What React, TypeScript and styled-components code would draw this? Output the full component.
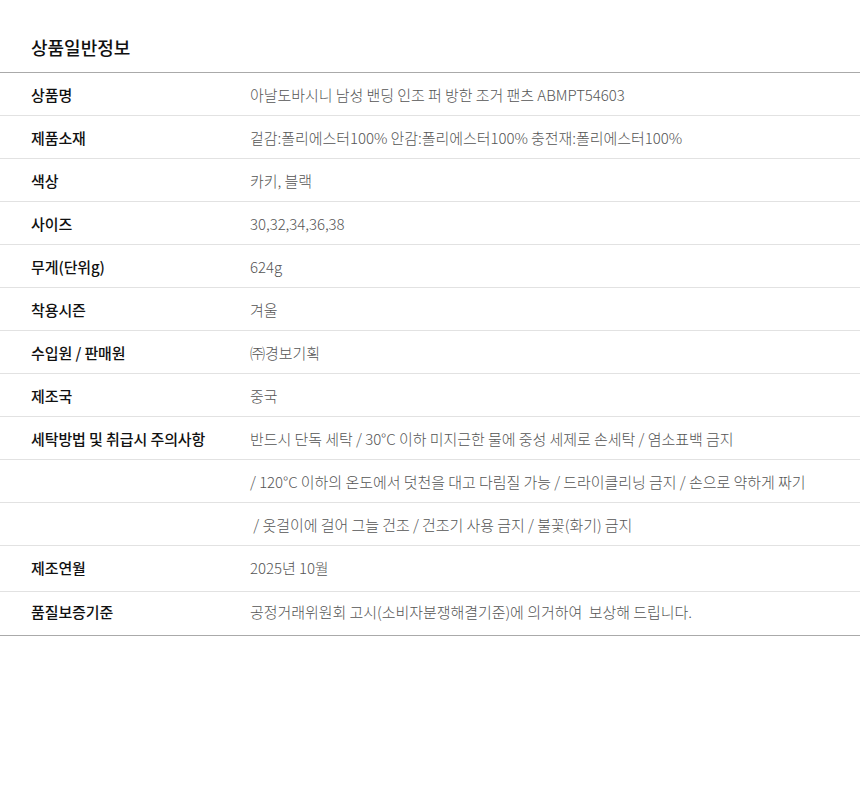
import React from "react";
import styled, { createGlobalStyle } from "styled-components";

const Global = createGlobalStyle`
  html, body { margin: 0; padding: 0; background: #fff; }
  body { font-family: "Noto Sans CJK KR", "Noto Sans", sans-serif; }
`;

const Wrap = styled.section`
  width: 860px;
`;

const Title = styled.h2`
  margin: 0;
  padding: 34px 31px 12px;
  height: 26px;
  line-height: 26px;
  font-size: 18px;
  font-weight: 500;
  color: #111;
  border-bottom: 1px solid #aaa;
`;

const Table = styled.div`
  display: flex;
  flex-direction: column;
  border-bottom: 1px solid #aaa;
`;

const Row = styled.div<{ $h?: number; $pb?: number; $last?: boolean }>`
  display: grid;
  grid-template-columns: 219px 1fr;
  align-items: center;
  box-sizing: border-box;
  height: ${(p) => p.$h ?? 43}px;
  padding: 0 0 ${(p) => p.$pb ?? 0}px 31px;
  border-bottom: ${(p) => (p.$last ? "none" : "1px solid #e2e2e2")};
`;

const Label = styled.div`
  font-size: 15px;
  font-weight: 500;
  color: #111;
  white-space: nowrap;
  letter-spacing: -0.1px;
`;

const Value = styled.div`
  font-size: 15px;
  font-weight: 300;
  color: #555;
  white-space: pre;
  letter-spacing: -0.05px;
`;

const rows: { label: string; value: string; h?: number; pb?: number }[] = [
  { label: "상품명", value: "아날도바시니 남성 밴딩 인조 퍼 방한 조거 팬츠 ABMPT54603" },
  { label: "제품소재", value: "겉감:폴리에스터100% 안감:폴리에스터100% 충전재:폴리에스터100%" },
  { label: "색상", value: "카키, 블랙" },
  { label: "사이즈", value: "30,32,34,36,38" },
  { label: "무게(단위g)", value: "624g" },
  { label: "착용시즌", value: "겨울" },
  { label: "수입원 / 판매원", value: "㈜경보기획" },
  { label: "제조국", value: "중국" },
  { label: "세탁방법 및 취급시 주의사항", value: "반드시 단독 세탁 / 30°C 이하 미지근한 물에 중성 세제로 손세탁 / 염소표백 금지" },
  { label: "", value: "/ 120°C 이하의 온도에서 덧천을 대고 다림질 가능 / 드라이클리닝 금지 / 손으로 약하게 짜기" },
  { label: "", value: " / 옷걸이에 걸어 그늘 건조 / 건조기 사용 금지 / 불꽃(화기) 금지" },
  { label: "제조연월", value: "2025년 10월", h: 46, pb: 2 },
  { label: "품질보증기준", value: "공정거래위원회 고시(소비자분쟁해결기준)에 의거하여  보상해 드립니다.", h: 43, pb: 5 },
];

export default function App() {
  return (
    <Wrap>
      <Global />
      <Title>상품일반정보</Title>
      <Table>
        {rows.map((r, i) => (
          <Row key={i} $h={r.h} $pb={r.pb} $last={i === rows.length - 1}>
            <Label>{r.label}</Label>
            <Value>{r.value}</Value>
          </Row>
        ))}
      </Table>
    </Wrap>
  );
}
